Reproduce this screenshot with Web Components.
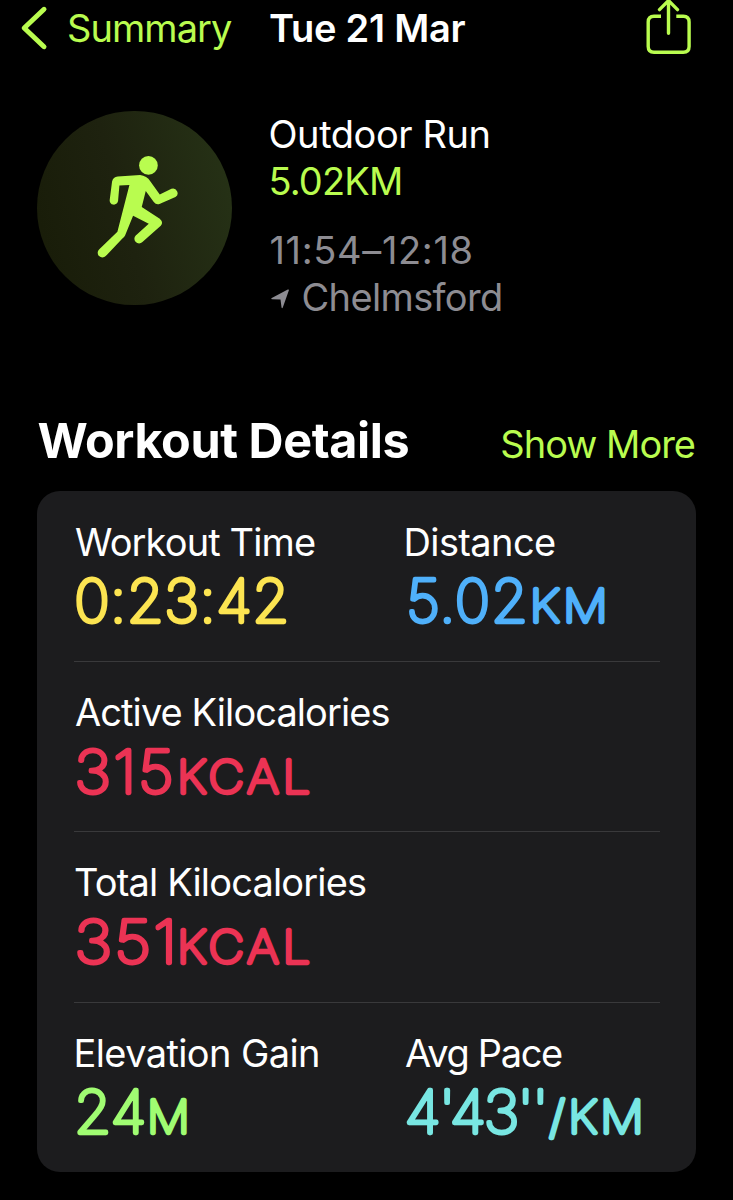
<!DOCTYPE html>
<html lang="en">
<head>
<meta charset="utf-8">
<title>Workout</title>
<style>
  html, body { margin: 0; background: #000; }
  body {
    width: 733px;
    height: 1200px;
    overflow: hidden;
    color: #fff;
    font-family: Inter, "Liberation Sans", sans-serif;
    --accent: #b9fc4f;
  }
</style>
</head>
<body>
<workout-page></workout-page>

<script>
const FONT = 'Inter, "Liberation Sans", sans-serif';
const canvas = document.createElement('canvas').getContext('2d');

// Bounds of the painted glyphs, without side bearings
function measureInk(text, size, weight) {
  canvas.font = `${weight} ${size}px ${FONT}`;
  const m = canvas.measureText(text);
  return { left: -m.actualBoundingBoxLeft, width: m.actualBoundingBoxRight + m.actualBoundingBoxLeft };
}

// One line of text, tracked so that its glyphs span `width` pixels
class FitText extends HTMLElement {
  constructor() {
    super();
    this.attachShadow({ mode: 'open' });
  }

  connectedCallback() {
    const text = this.getAttribute('text');
    const size = Number(this.getAttribute('size') || 38);
    const weight = this.getAttribute('weight') || 400;
    const width = Number(this.getAttribute('width'));
    const ink = measureInk(text, size, weight);
    const spacing = (width - ink.width) / (text.length - 1);

    this.shadowRoot.innerHTML = `
      <style>
        :host {
          display: block;
          white-space: nowrap;
          font-size: ${size}px;
          font-weight: ${weight};
          line-height: 46.5px;
        }
        span {
          letter-spacing: ${spacing.toFixed(3)}px;
          margin-left: ${(-ink.left).toFixed(2)}px;
          margin-right: ${(-spacing).toFixed(2)}px;
        }
      </style>
      <span>${text}</span>
    `;
  }
}
customElements.define('fit-text', FitText);

class NavHeader extends HTMLElement {
  constructor() {
    super();
    this.attachShadow({ mode: 'open' });
    this.shadowRoot.innerHTML = `
      <style>
        :host { display: grid; grid-template-columns: 270px 1fr auto; align-items: center; height: 56px; padding-right: 42px; }
        .back { display: flex; align-items: center; gap: 19px; padding-left: 20px; color: var(--accent); }
        svg { display: block; fill: none; stroke: var(--accent); stroke-linecap: round; stroke-linejoin: round; }
      </style>
      <div class="back">
        <svg width="30" height="56" viewBox="20 0 30 56" stroke-width="5"><path d="M44 9.3 24.2 28 44 46.7"/></svg>
        <fit-text text="Summary" width="163"></fit-text>
      </div>
      <fit-text text="Tue 21 Mar" weight="600" width="195.5"></fit-text>
      <svg width="46" height="56" viewBox="645 0 46 56" stroke-width="3.4">
        <path stroke-linecap="butt" d="M661 16.2h-7q-5.8 0-5.8 5.8v24.5q0 5.8 5.8 5.8h29.3q5.8 0 5.8-5.8v-24.5q0-5.8-5.8-5.8h-7"/>
        <path d="M668.5 33.3V1M659.5 9.6l9-9 9 9"/>
      </svg>
    `;
  }
}
customElements.define('nav-header', NavHeader);

class WorkoutSummary extends HTMLElement {
  constructor() {
    super();
    this.attachShadow({ mode: 'open' });
    this.shadowRoot.innerHTML = `
      <style>
        :host { display: flex; align-items: flex-start; gap: 39px; padding: 54.5px 37px 0; }
        .badge { display: block; flex: none; width: 194.5px; height: 194.5px; border-radius: 50%; background: linear-gradient(75deg, #191d09 10%, #1e220f 45%, #263216 95%); }
        .info { padding-top: 0.7px; }
        .when { margin-top: 23px; color: #8d8c92; }
        .distance { color: var(--accent); }
        .place { display: flex; align-items: center; gap: 15px; }
        .arrow { margin-top: 4px; }
      </style>
      <svg class="badge" viewBox="21 32 583 583" fill="#b9fc4f">
        <circle cx="355" cy="195" r="28"/>
        <path d="M239 298 246 243Q249 229 263 228L330 224Q350 226 361 243L389 282 424 265A14 14 0 0 1 436 290L388 311Q378 314 371 305L347 272 335 320 389 355Q401 366 392 376L337 425A14 14 0 0 1 317 405L356 370 309 346 285 405Q283 409 277 414L227 467A14 14 0 0 1 207 447L262 394 298 254 268 255 264 302A12.5 12.5 0 0 1 239 298Z"/>
      </svg>
      <div class="info">
        <fit-text text="Outdoor Run" width="218"></fit-text>
        <fit-text class="distance" text="5.02KM" width="129.5"></fit-text>
        <div class="when">
          <fit-text text="11:54–12:18" width="201"></fit-text>
          <div class="place">
            <svg class="arrow" width="18" height="20" viewBox="0 0 18 20"><path fill="#8d8c92" d="M.8 9 16.8.5Q18.3 0 17.8 1.5L11.8 18.5Q11 20 10.5 18.3L9.5 10.5 1 10.3Q-.5 10 .8 9Z"/></svg>
            <fit-text text="Chelmsford" width="197.5"></fit-text>
          </div>
        </div>
      </div>
    `;
  }
}
customElements.define('workout-summary', WorkoutSummary);

// Label over a rounded number with a smaller unit after it.
// `value` and `unit` hold "text|left|right|tracking" relative to the cell.
class WorkoutMetric extends HTMLElement {
  constructor() {
    super();
    this.attachShadow({ mode: 'open' });
  }

  connectedCallback() {
    this.shadowRoot.innerHTML = `
      <style>
        :host { display: block; }
        fit-text { padding-left: var(--indent, 1px); }
        svg { display: block; overflow: visible; fill: currentColor; stroke: currentColor; stroke-linejoin: round; stroke-linecap: round; color: ${this.getAttribute('color')}; }
      </style>
      <fit-text text="${this.getAttribute('label')}" width="${this.getAttribute('width')}"></fit-text>
      <svg width="250" height="76">
        ${this.part(this.getAttribute('value'), 59)}
        ${this.part(this.getAttribute('unit'), 45)}
      </svg>
    `;
  }

  part(spec, size) {
    if (!spec) return '';
    const stroke = 4.3;
    const weight = 100;
    const [text, from, to, tracking] = spec.split('|');
    const spacing = Number(tracking || 0);
    const ink = measureInk(text, size, weight);
    const natural = ink.width + spacing * (text.length - 1) + stroke;
    const scale = (to - from) / natural;
    const x = stroke / 2 - ink.left;
    return `<text transform="translate(${from} 56.7) scale(${scale.toFixed(4)} 1)" x="${x.toFixed(2)}" font-size="${size}" font-weight="${weight}" stroke-width="${stroke}" letter-spacing="${spacing}">${text}</text>`;
  }
}
customElements.define('workout-metric', WorkoutMetric);

class MetricRow extends HTMLElement {
  constructor() {
    super();
    this.attachShadow({ mode: 'open' });
    this.shadowRoot.innerHTML = `
      <style>
        :host {
          display: grid;
          grid-template-columns: 330px 1fr;
          align-content: start;
          box-sizing: border-box;
          height: 170.25px;
          padding-top: 27px;
          border-bottom: 1px solid #39393b;
        }
        :host(:last-child) { border-bottom: 0; }
      </style>
      <slot></slot>
    `;
  }
}
customElements.define('metric-row', MetricRow);

class DetailsSection extends HTMLElement {
  constructor() {
    super();
    this.attachShadow({ mode: 'open' });
    this.shadowRoot.innerHTML = `
      <style>
        :host { display: block; margin: 91px 37px 0; }
        header { display: flex; align-items: baseline; justify-content: space-between; padding: 0 0 0 1.5px; height: 60px; }
        header fit-text { line-height: 60px; }
        .more { color: var(--accent); }
        .card { box-sizing: border-box; height: 681px; margin-top: 20px; padding: 0.6px 36px 0 37px; background: #1c1c1e; border-radius: 23px; }
      </style>
      <header>
        <fit-text text="Workout Details" size="48.5" weight="700" width="370"></fit-text>
        <fit-text class="more" text="Show More" width="192.5"></fit-text>
      </header>
      <div class="card"><slot></slot></div>
    `;
  }
}
customElements.define('details-section', DetailsSection);

class WorkoutPage extends HTMLElement {
  constructor() {
    super();
    this.attachShadow({ mode: 'open' });
    this.shadowRoot.innerHTML = `
      <style>
        :host { display: block; }
        .inset { --indent: 2.5px; }
      </style>
      <nav-header></nav-header>
      <workout-summary></workout-summary>
      <details-section>
        <metric-row>
          <workout-metric label="Workout Time" width="240" value="0:23:42|2|213|0.5" color="#fce451"></workout-metric>
          <workout-metric class="inset" label="Distance" width="148.5" value="5.02|4|121.5|1" unit="KM|129|201.5|3" color="#4fb0fa"></workout-metric>
        </metric-row>
        <metric-row>
          <workout-metric label="Active Kilocalories" width="314.5" value="315|2.5|97.5|2" unit="KCAL|106|236|3.5" color="#eb3354"></workout-metric>
        </metric-row>
        <metric-row>
          <workout-metric label="Total Kilocalories" width="291" value="351|2.5|98|2" unit="KCAL|106|236|3.5" color="#eb3354"></workout-metric>
        </metric-row>
        <metric-row>
          <workout-metric class="inset" label="Elevation Gain" width="241.5" value="24|3|70.5" unit="M|76|113.5" color="#a0fc72"></workout-metric>
          <workout-metric label="Avg Pace" width="157" value="4'43''|2.5|139.5|-2" unit="/KM|144|237.5|3" color="#78e6e2"></workout-metric>
        </metric-row>
      </details-section>
    `;
  }
}
customElements.define('workout-page', WorkoutPage);
</script>
</body>
</html>
